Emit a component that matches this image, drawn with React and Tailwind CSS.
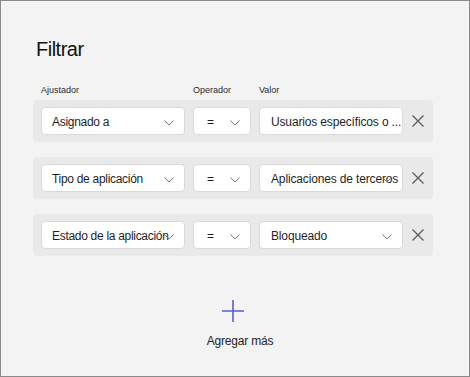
import React from "react";

function Chevron() {
  return (
    <svg width="10" height="6" viewBox="0 0 10 6" className="absolute right-[10px] top-[12px]">
      <path d="M0.5 0.5 L5 5 L9.5 0.5" fill="none" stroke="#7a7a7a" strokeWidth="1" />
    </svg>
  );
}

function Drop({ w, text, chevron = true, pl = "pl-[10px]", track = "tracking-[-0.3px]" }) {
  return (
    <div className={`relative h-[28px] ${w} shrink-0 rounded-[4px] border border-[#d9d9d9] bg-white flex items-center ${pl} pt-[2px]`}>
      <span className={`whitespace-nowrap text-[12px] ${track} text-[#1f1f1f]`}>{text}</span>
      {chevron && <Chevron />}
    </div>
  );
}

function XIcon() {
  return (
    <svg width="12" height="12" viewBox="0 0 12 12" className="ml-[9px] shrink-0">
      <path d="M0.5 0.5 L11.5 11.5 M11.5 0.5 L0.5 11.5" stroke="#5c5c5c" strokeWidth="1.3" fill="none" />
    </svg>
  );
}

function Row({ a, b, c, cChevron = true }) {
  return (
    <div className="h-[42px] w-[400px] rounded-[4px] bg-[#e9e9e9] flex items-center pl-[8px] gap-[8px]">
      <Drop w="w-[144px]" text={a} />
      <Drop w="w-[58px]" text={b} pl="pl-[13px]" />
      <div className="flex items-center">
        <Drop w="w-[144px]" text={c} chevron={cChevron} pl="pl-[11px]" track="tracking-[-0.15px]" />
        <XIcon />
      </div>
    </div>
  );
}

export default function App() {
  return (
    <div
      className="w-[470px] h-[377px] border border-[#8a8a8a] bg-[#f3f3f3] pl-[32px] pt-[36px] overflow-hidden"
      style={{ fontFamily: '"Liberation Sans", Arial, sans-serif' }}
    >
      <div className="pl-[3px] text-[20px] leading-[24px] tracking-[-0.5px] text-[#111111]">Filtrar</div>
      <div className="mt-[23px] flex h-[12px] text-[9px] leading-[12px] text-[#2a2a2a] pl-[8px]">
        <span className="w-[152px]">Ajustador</span>
        <span className="w-[66px]">Operador</span>
        <span>Valor</span>
      </div>
      <div className="mt-[4px] flex flex-col gap-[15px]">
        <Row a="Asignado a" b="=" c="Usuarios específicos o ..." cChevron={false} />
        <Row a="Tipo de aplicación" b="=" c="Aplicaciones de terceros" />
        <Row a="Estado de la aplicación" b="=" c="Bloqueado" />
      </div>
      <div className="w-[400px] flex flex-col items-center mt-[44px]">
        <svg width="22" height="22" viewBox="0 0 22 22">
          <path d="M11 0 V22 M0 11 H22" stroke="#5b5fc7" strokeWidth="1.6" fill="none" />
        </svg>
        <div className="mt-[11px] pl-[14px] text-[12px] leading-[16px] tracking-[-0.2px] text-[#242424]">Agregar más</div>
      </div>
    </div>
  );
}
